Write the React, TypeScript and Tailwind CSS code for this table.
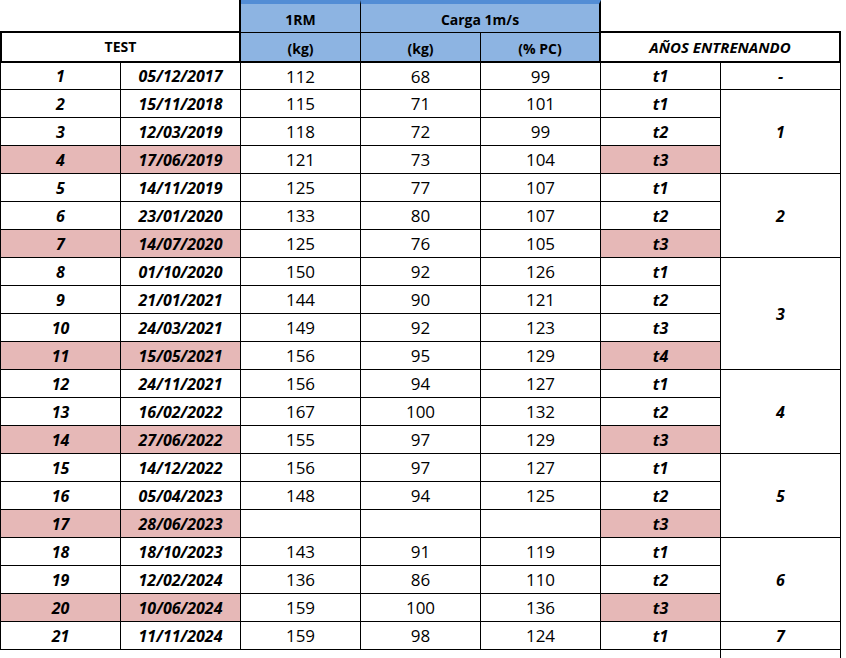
import React from "react";

type Row = [number, string, number | "", number | "", number | "", string, boolean];

const rows: Row[] = [
  [1, "05/12/2017", 112, 68, 99, "t1", false],
  [2, "15/11/2018", 115, 71, 101, "t1", false],
  [3, "12/03/2019", 118, 72, 99, "t2", false],
  [4, "17/06/2019", 121, 73, 104, "t3", true],
  [5, "14/11/2019", 125, 77, 107, "t1", false],
  [6, "23/01/2020", 133, 80, 107, "t2", false],
  [7, "14/07/2020", 125, 76, 105, "t3", true],
  [8, "01/10/2020", 150, 92, 126, "t1", false],
  [9, "21/01/2021", 144, 90, 121, "t2", false],
  [10, "24/03/2021", 149, 92, 123, "t3", false],
  [11, "15/05/2021", 156, 95, 129, "t4", true],
  [12, "24/11/2021", 156, 94, 127, "t1", false],
  [13, "16/02/2022", 167, 100, 132, "t2", false],
  [14, "27/06/2022", 155, 97, 129, "t3", true],
  [15, "14/12/2022", 156, 97, 127, "t1", false],
  [16, "05/04/2023", 148, 94, 125, "t2", false],
  [17, "28/06/2023", "", "", "", "t3", true],
  [18, "18/10/2023", 143, 91, 119, "t1", false],
  [19, "12/02/2024", 136, 86, 110, "t2", false],
  [20, "10/06/2024", 159, 100, 136, "t3", true],
  [21, "11/11/2024", 159, 98, 124, "t1", false],
];

const years: Record<number, { label: string; span: string }> = {
  1: { label: "-", span: "row-span-1" },
  2: { label: "1", span: "row-span-3" },
  5: { label: "2", span: "row-span-3" },
  8: { label: "3", span: "row-span-4" },
  12: { label: "4", span: "row-span-3" },
  15: { label: "5", span: "row-span-3" },
  18: { label: "6", span: "row-span-3" },
  21: { label: "7", span: "row-span-1" },
};

const bi = "font-bold italic text-[16px]";
const num = "text-[17px]";
const cell = "flex items-center justify-center border-black";

export default function App() {
  return (
    <div
      className="min-h-screen bg-white text-black"
      style={{ fontFamily: '"Open Sans", "Noto Sans", sans-serif' }}
    >
      <div className="grid grid-cols-[121px_repeat(6,120px)] grid-rows-[33px_30px_27px_repeat(20,28px)_8px] leading-none">
        {/* Header row A */}
        <div className="col-span-2 border-r-2 border-b-2 border-black" />
        <div className="flex items-center justify-center pt-1 bg-[#8db4e2] border-t-4 border-t-[#538dd5] border-r border-b border-r-black border-b-black text-[14px] font-bold">
          1RM
        </div>
        <div className="col-span-2 flex items-center justify-center pt-1 bg-[#8db4e2] border-t-4 border-t-[#538dd5] border-r-2 border-b border-r-black border-b-black text-[14px] font-bold">
          Carga 1m/s
        </div>
        <div className="col-span-2 border-b-2 border-black" />

        {/* Header row B */}
        <div className={`col-span-2 ${cell} border-l-2 border-r-2 border-b-2 text-[14px] font-bold`}>TEST</div>
        <div className={`${cell} pt-1 bg-[#8db4e2] border-r border-b-2 text-[14px] font-bold`}>(kg)</div>
        <div className={`${cell} pt-1 bg-[#8db4e2] border-r border-b-2 text-[14px] font-bold`}>(kg)</div>
        <div className={`${cell} pt-1 bg-[#8db4e2] border-r-2 border-b-2 text-[14px] font-bold`}>(% PC)</div>
        <div className={`col-span-2 ${cell} border-r-2 border-b-2 text-[15px] font-bold italic`}>AÑOS ENTRENANDO</div>

        {/* Data */}
        {rows.map(([n, date, rm, kg, pc, t, pink]) => {
          const bg = pink ? "bg-[#e6b8b7]" : "bg-white";
          const y = years[n];
          return (
            <React.Fragment key={n}>
              <div className={`${cell} ${bg} border-l border-r border-b ${bi}`}>{n}</div>
              <div className={`${cell} ${bg} border-r border-b ${bi}`}>{date}</div>
              <div className={`${cell} border-r border-b ${num}`}>{rm}</div>
              <div className={`${cell} border-r border-b ${num}`}>{kg}</div>
              <div className={`${cell} border-r border-b ${num}`}>{pc}</div>
              <div className={`${cell} ${bg} border-r border-b ${bi}`}>{t}</div>
              {y && (
                <div className={`${cell} ${y.span} border-r border-b ${bi}`}>{y.label}</div>
              )}
            </React.Fragment>
          );
        })}

        {/* Partial next row */}
        <div className="col-span-6 border-r border-black" />
        <div className="border-r border-black" />
      </div>
    </div>
  );
}
